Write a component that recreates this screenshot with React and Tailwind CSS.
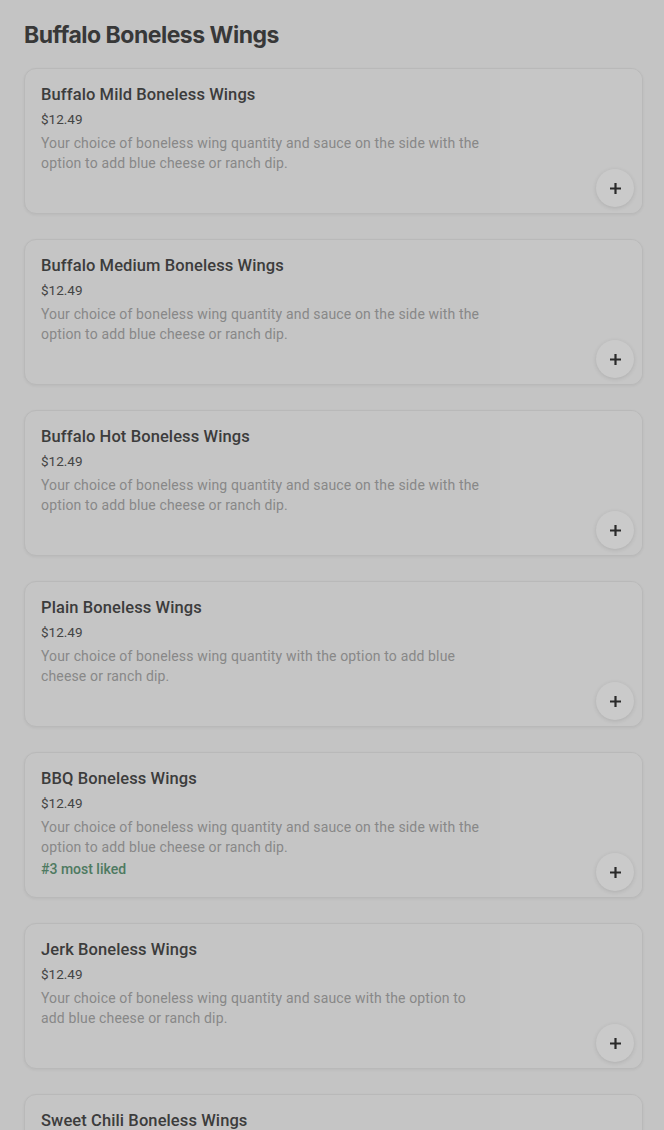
const items = [
  {
    name: 'Buffalo Mild Boneless Wings',
    desc: 'Your choice of boneless wing quantity and sauce on the side with the option to add blue cheese or ranch dip.',
  },
  {
    name: 'Buffalo Medium Boneless Wings',
    desc: 'Your choice of boneless wing quantity and sauce on the side with the option to add blue cheese or ranch dip.',
  },
  {
    name: 'Buffalo Hot Boneless Wings',
    desc: 'Your choice of boneless wing quantity and sauce on the side with the option to add blue cheese or ranch dip.',
  },
  {
    name: 'Plain Boneless Wings',
    desc: 'Your choice of boneless wing quantity with the option to add blue cheese or ranch dip.',
  },
  {
    name: 'BBQ Boneless Wings',
    desc: 'Your choice of boneless wing quantity and sauce on the side with the option to add blue cheese or ranch dip.',
    badge: '#3 most liked',
  },
  {
    name: 'Jerk Boneless Wings',
    desc: 'Your choice of boneless wing quantity and sauce with the option to add blue cheese or ranch dip.',
  },
  {
    name: 'Sweet Chili Boneless Wings',
    desc: 'Your choice of boneless wing quantity and sauce on the side with the option to add blue cheese or ranch dip.',
  },
];

const PlusIcon = () => (
  <svg width="13" height="13" viewBox="0 0 13 13" fill="none">
    <path d="M6.5 1v11M1 6.5h11" stroke="#2a2a2a" strokeWidth="2.2" />
  </svg>
);

const ItemCard = ({ item }) => (
  <div className="relative flex h-[146px] shrink-0 overflow-hidden rounded-xl border border-[#b9b9b9] bg-[#c5c5c5] shadow-[0_1px_3px_rgba(0,0,0,0.06)]">
    <div className="w-[475px] shrink-0 pl-4 pt-[14px]">
      <h3 className="text-[16.5px] font-medium leading-6 tracking-[0.1px] text-[#3c3c3c]">{item.name}</h3>
      <p className="mt-[2px] text-[13.5px] leading-5 text-[#444444]">$12.49</p>
      <p className="mt-[4px] w-[447px] text-[14px] leading-5 tracking-[0.15px] text-[#888888]">{item.desc}</p>
      {item.badge && (
        <p className="mt-[2px] text-[14px] font-medium leading-5 text-[#4e7a61]">{item.badge}</p>
      )}
    </div>
    <div className="flex-1 bg-[#c6c6c6]" />
    <button className="absolute bottom-[6px] right-[8px] flex h-[38px] w-[38px] items-center justify-center rounded-full bg-[#cacaca] shadow-[0_1px_4px_rgba(0,0,0,0.12)]">
      <PlusIcon />
    </button>
  </div>
);

export default function App() {
  return (
    <div
      className="min-h-screen h-[1130px] overflow-hidden bg-[#c4c4c4] pl-6 pr-[21px] pt-[19px]"
      style={{ fontFamily: 'Roboto, "Liberation Sans", sans-serif' }}
    >
      <h2
        className="text-[23px] font-bold leading-8 tracking-[-0.5px] text-[#383838]"
        style={{ fontFamily: 'Inter, "Liberation Sans", sans-serif' }}
      >
        Buffalo Boneless Wings
      </h2>
      <div className="mt-[17px] flex flex-col gap-[25px]">
        {items.map((item) => (
          <ItemCard key={item.name} item={item} />
        ))}
      </div>
    </div>
  );
}
